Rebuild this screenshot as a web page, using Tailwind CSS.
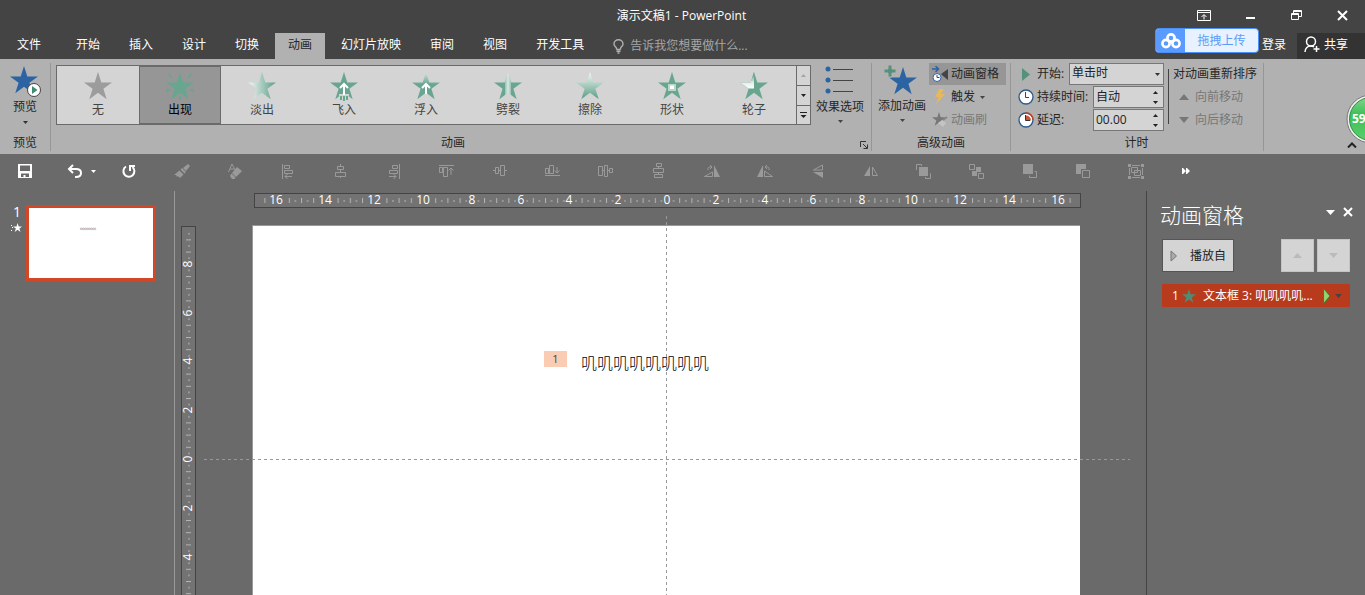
<!DOCTYPE html>
<html lang="zh-CN">
<head>
<meta charset="utf-8">
<title>演示文稿1 - PowerPoint</title>
<script src="https://cdn.jsdelivr.net/npm/@tailwindcss/browser@4"></script>
</head>
<body class="relative flex h-screen flex-col overflow-hidden bg-[#6a6a6a] font-['Open_Sans','Noto_Sans_CJK_SC',sans-serif] text-[12px] leading-4 text-white">
<svg class="absolute size-0" aria-hidden="true">
  <defs>
    <linearGradient id="fade" x1="0" x2="1" y1="0" y2="0"><stop offset="0.1" stop-color="#e4eeea"/><stop offset="0.9" stop-color="#69a690"/></linearGradient>
    <linearGradient id="float" x1="0" x2="0" y1="0" y2="1"><stop offset="0" stop-color="#d4e4de"/><stop offset="0.45" stop-color="#69a690"/></linearGradient>
    <linearGradient id="wipe" x1="0" x2="0" y1="0" y2="1"><stop offset="0" stop-color="#f4f8f6"/><stop offset="0.9" stop-color="#69a690"/></linearGradient>
    <linearGradient id="split" x1="0" x2="1" y1="0" y2="0"><stop offset="0.38" stop-color="#69a690"/><stop offset="0.4" stop-color="#9cc4b5"/><stop offset="0.5" stop-color="#d9e8e2"/><stop offset="0.6" stop-color="#9cc4b5"/><stop offset="0.62" stop-color="#69a690"/></linearGradient>
    <linearGradient id="wheel" x1="0" x2="0" y1="0" y2="1"><stop offset="0.2" stop-color="#69a690"/><stop offset="0.65" stop-color="#e4eeea"/><stop offset="1" stop-color="#ffffff"/></linearGradient>
    <linearGradient id="ball" x1="0" x2="0" y1="0" y2="1"><stop offset="0" stop-color="#7fd68c"/><stop offset="0.4" stop-color="#3fbf57"/><stop offset="1" stop-color="#58cf6a"/></linearGradient>
    <path id="star" d="M14 0 17.3 10.4H28L19.4 16.8 22.7 27.3 14 20.8 5.300 27.300 8.600 16.800 0 10.400H10.700Z"/>
    <pattern id="ticksX" x="0" y="-7" width="12.2" height="14" patternUnits="userSpaceOnUse"><rect x="0" y="4" width="1" height="5" fill="#b4b4b4"/><rect x="6.1" y="6" width="1" height="2" fill="#b4b4b4"/></pattern>
    <pattern id="ticksY" x="-7" y="0" width="14" height="12.2" patternUnits="userSpaceOnUse"><rect x="4" y="0" width="5" height="1" fill="#b4b4b4"/><rect x="6" y="6.1" width="2" height="1" fill="#b4b4b4"/></pattern>
  </defs>
</svg>

<header class="bg-[#444444]">
  <div class="flex h-[33px] items-center">
    <div class="w-[182px]"></div>
    <h1 class="flex-1 pb-px text-center">演示文稿1 - PowerPoint</h1>
    <div class="flex w-[184px] justify-end pb-[2px]">
      <button aria-label="功能区显示选项" class="flex w-[46px] items-center justify-center"><svg width="14" height="11" fill="none" stroke="#fff"><path d="M.5.5h13v10h-13zM.5 2.500h13M7 9.500V5M4.500 7 7 4.500 9.500 7"/></svg></button>
      <button aria-label="最小化" class="flex w-[46px] items-end justify-center"><svg width="9" height="4"><path d="M0 0h9v2H0z" fill="#fff"/></svg></button>
      <button aria-label="还原" class="flex w-[46px] items-center justify-center"><svg width="11" height="11" fill="none" stroke="#fff"><path d="M.5 3.500h7v6h-7zM.5 4.500h7M2.500 3V.5h8v6H8M2.500 1.500h8"/></svg></button>
      <button aria-label="关闭" class="flex w-[46px] items-center justify-center"><svg width="11" height="11"><path d="m1 1 9 9M10 1l-9 9" stroke="#fff" stroke-width="2"/></svg></button>
    </div>
  </div>
  <nav class="flex h-[26px] items-stretch gap-[3px] whitespace-nowrap">
    <button class="w-[60px] pl-[17px] pb-[2px] text-left">文件</button>
    <button class="px-[13px] pb-[2px]">开始</button>
    <button class="px-[13px] pb-[2px]">插入</button>
    <button class="px-[13px] pb-[2px]">设计</button>
    <button class="px-[13px] pb-[2px]">切换</button>
    <button class="bg-[#b1b1b1] px-[13px] pb-[2px] text-[#262626]">动画</button>
    <button class="px-[13px] pb-[2px]">幻灯片放映</button>
    <button class="px-[13px] pb-[2px]">审阅</button>
    <button class="px-[13px] pb-[2px]">视图</button>
    <button class="px-[13px] pb-[2px]">开发工具</button>
    <button class="flex items-center gap-[6px] pl-[13px] text-[#a6a6a6]"><svg width="11" height="15" fill="none" stroke="#b0b0b0" stroke-width="1.4"><path d="M3.500 10.500V9.500C3.500 8 1 7.500 1 5a4.500 4.300 0 0 1 9 0c0 2.500-2.500 3-2.500 4.500v1M3.500 10.500h4M3.500 12.300h4M4.500 14h2"/></svg><span>告诉我您想要做什么...</span></button>
    <div class="ml-auto flex">
      <button class="w-[35px] pb-[2px] text-left">登录</button>
      <button class="flex w-[68px] items-center gap-1 bg-[#333333] pl-[7px] pb-[3px]"><svg width="16" height="17" fill="none" stroke="#fff" stroke-width="1.5"><circle cx="7" cy="5.500" r="4.500"/><path d="M1 16c0-4 3-6 5.500-6 1.500 0 2.500.3 3.500 1M12.500 10v6M9.500 13h6"/></svg>共享</button>
    </div>
  </nav>
</header>

<section aria-label="动画功能区" class="flex h-[95px] shrink-0 bg-[#b1b1b1] pt-1 text-[#262626]">
  <div class="flex h-[88px] w-[51px] shrink-0 flex-col items-center border-r border-[#969696]">
    <button class="flex flex-col items-center pt-[3px]">
      <svg class="ml-[2px]" width="32" height="33" viewBox="0 0 32 33"><use href="#star" fill="#2b63a3"/><circle cx="24" cy="24" r="6.500" fill="#fff" stroke="#444"/><path d="M22 20v8l5.500-4z" fill="#3f8a70"/></svg>
      <span>预览</span>
      <svg class="mt-[6px]" width="5" height="3"><path d="M0 0h5L2.500 3z" fill="#333"/></svg>
    </button>
    <span class="mt-auto">预览</span>
  </div>

  <div class="flex h-[88px] w-[821px] shrink-0 flex-col border-r border-[#969696] pt-[2px] pl-[5px]">
    <div class="flex">
      <div class="flex h-[60px] border border-[#6a6a6a] bg-[#d4d4d4] text-[#444]">
        <button class="flex w-[82px] flex-col items-center gap-[2px] pt-[6px]"><svg width="28" height="28" fill="#9c9c9c"><use href="#star"/></svg>无</button>
        <button class="flex h-[58px] w-[82px] flex-col items-center gap-[2px] border border-[#6a6a6a] bg-[#969696] pt-[5px] text-black"><svg width="28" height="28" fill="#69a690"><use href="#star"/><path d="m2 1 4 4-1 1zM26 1l-4 4 1 1zM0 17l4 1-3 2zM28 17l-4 1 3 2zM13 28l1-4 1 4z" stroke="#69a690"/></svg>出现</button>
        <button class="flex w-[82px] flex-col items-center gap-[2px] pt-[6px]"><svg width="28" height="28"><use href="#star" fill="url(#fade)"/></svg>淡出</button>
        <button class="flex w-[82px] flex-col items-center gap-[2px] pt-[6px]"><svg class="overflow-visible" width="28" height="28"><use href="#star" fill="#69a690"/><path d="M9 22h10v7H9z" fill="#d4d4d4"/><path d="M11 24v4M14 24v5M17 24v4" stroke="#69a690" stroke-width="2"/><path d="M14 23V12M10 16l4-4 4 4" fill="none" stroke="#fff" stroke-width="2"/></svg>飞入</button>
        <button class="flex w-[82px] flex-col items-center gap-[2px] pt-[6px]"><svg width="28" height="28"><use href="#star" fill="url(#float)"/><path d="M14 22V12M10 16l4-4 4 4" fill="none" stroke="#fff" stroke-width="2"/></svg>浮入</button>
        <button class="flex w-[82px] flex-col items-center gap-[2px] pt-[6px]"><svg width="28" height="28"><use href="#star" fill="url(#split)"/></svg>劈裂</button>
        <button class="flex w-[82px] flex-col items-center gap-[2px] pt-[6px]"><svg width="28" height="28"><use href="#star" fill="url(#wipe)"/></svg>擦除</button>
        <button class="flex w-[82px] flex-col items-center gap-[2px] pt-[6px]"><svg width="28" height="28"><use href="#star" fill="#69a690"/><path d="M10 12h8v7h-8z" fill="#b9d6cb"/><path d="M12 13.500h4v3.500h-4z" fill="#fff"/></svg>形状</button>
        <button class="flex w-[82px] flex-col items-center gap-[2px] pt-[6px]"><svg width="28" height="28"><use href="#star" fill="#69a690"/><path d="M14 0v16.500H8.600L0 10.400H10.700Z" fill="url(#wheel)"/></svg>轮子</button>
        <div class="ml-px flex w-[14px] flex-col divide-y divide-[#6a6a6a] border-l border-[#6a6a6a]">
          <button aria-label="上一行" class="flex h-5 items-center justify-center"><svg width="5" height="3"><path d="M0 3h5L2.500 0z" fill="#a5a5a5"/></svg></button>
          <button aria-label="下一行" class="flex h-5 items-center justify-center"><svg width="5" height="3"><path d="M0 0h5L2.500 3z" fill="#222"/></svg></button>
          <button aria-label="其他" class="flex flex-1 items-center justify-center"><svg width="7" height="6"><path d="M0 0h7v1H0zM.5 3h6l-3 3z" fill="#222"/></svg></button>
        </div>
      </div>
      <button class="flex w-[58px] flex-col items-center">
        <svg width="30" height="32"><g fill="#2b63a3"><circle cx="3" cy="4" r="2.500"/><circle cx="3" cy="15" r="2.500"/><circle cx="3" cy="26" r="2.500"/></g><path d="M8 4.500h20M8 15.500h20M8 26.500h20" stroke="#444"/></svg>
        <span class="mt-[2px]">效果选项</span>
        <svg class="mt-[5px]" width="5" height="3"><path d="M0 0h5L2.500 3z" fill="#444"/></svg>
      </button>
    </div>
    <div class="mt-auto flex items-center"><span class="flex-1 pr-[22px] text-center">动画</span>
      <button aria-label="动画对话框" class="-ml-3 mr-[3px] mt-1"><svg width="8" height="8" fill="none" stroke="#333"><path d="M.5 6V.5H6M3 3l4 4M7.500 3.500v4h-4"/></svg></button></div>
  </div>

  <div class="flex h-[88px] w-[139px] shrink-0 flex-col border-r border-[#969696]">
    <div class="flex">
      <button class="flex w-[57px] flex-col items-center pl-[3px] pt-[2px] whitespace-nowrap">
        <svg class="-ml-[4px]" width="34" height="32"><use href="#star" fill="#2b63a3" transform="translate(6 2)"/><path d="M5 0h4v4h4v4H9v4H5V8H1V4h4z" fill="#57917c" stroke="#b1b1b1"/></svg>
        <span class="mt-px">添加动画</span>
        <svg class="mt-[5px]" width="5" height="3"><path d="M0 0h5L2.500 3z" fill="#444"/></svg>
      </button>
      <div class="flex flex-col whitespace-nowrap">
        <button class="flex h-[22px] w-[77px] items-center gap-[3px] bg-[#969696] pl-[3px]"><svg width="16" height="17"><path d="M0 3h6M3.500 0l3 3-3 3" fill="none" stroke="#2b63a3" stroke-width="1.500"/><circle cx="5" cy="11.500" r="4" fill="#fff" stroke="#2b63a3"/><path d="M5 9v2.500h2.500" fill="none" stroke="#444"/><path d="M9 8l7-5v11l-5-4z" fill="#444"/></svg>动画窗格</button>
        <button class="flex h-[23px] items-center gap-[5px] pl-[5px] pt-px"><svg width="12" height="16"><path d="M5 0h5L7 5h4L2 15l3-7H1z" fill="#eab85c"/></svg>触发<svg width="5" height="3"><path d="M0 0h5L2.500 3z" fill="#444"/></svg></button>
        <button class="flex h-[23px] items-center gap-[3px] pl-[3px] text-[#777]" disabled><svg width="16" height="16"><use href="#star" fill="#777" transform="scale(.5)"/><path d="m6 11 4-3 4 3-3 4z" fill="#c4c4c4"/><path d="m11 8 4-3" stroke="#888" stroke-width="2"/></svg>动画刷</button>
      </div>
    </div>
    <span class="mt-auto text-center">高级动画</span>
  </div>

  <div class="flex h-[88px] w-[253px] shrink-0 flex-col border-r border-[#969696] pl-[7px]">
    <div class="flex whitespace-nowrap">
      <div class="flex w-[146px] flex-col gap-px">
        <div class="flex h-[22px] items-center">
          <svg class="w-[19px]" width="19" height="13"><path d="M4 0v13l8-6.500z" fill="#57917c"/></svg>
          <label for="start" class="w-[32px]">开始:</label>
          <div class="relative flex-1">
            <select id="start" class="h-[22px] w-full appearance-none border border-[#777] bg-[#d4d4d4] px-[2px] pb-[2px] text-[12px] text-[#222]"><option>单击时</option></select>
            <svg class="pointer-events-none absolute right-1 top-[10px]" width="5" height="3"><path d="M0 0h5L2.500 3z" fill="#333"/></svg>
          </div>
        </div>
        <div class="flex h-[22px] items-center">
          <svg width="19" height="16"><circle cx="8" cy="8" r="7" fill="#fff" stroke="#2b5a8c" stroke-width="1.300"/><path d="M7.500 3v5.500H11" fill="none" stroke="#444"/></svg>
          <label for="dur" class="flex-1">持续时间:</label>
          <div class="flex h-[22px] w-[71px] border border-[#777] bg-[#d4d4d4]">
            <input id="dur" value="自动" class="w-[59px] pl-[2px] text-[#222]">
            <div class="flex flex-col justify-around"><button aria-label="增加持续时间"><svg width="5" height="3"><path d="M0 3h5L2.500 0z" fill="#222"/></svg></button><button aria-label="减少持续时间"><svg width="5" height="3"><path d="M0 0h5L2.500 3z" fill="#222"/></svg></button></div>
          </div>
        </div>
        <div class="flex h-[22px] items-center">
          <svg width="19" height="16"><circle cx="8" cy="8" r="7" fill="#fff" stroke="#2b5a8c" stroke-width="1.300"/><path d="M8 1a7 7 0 0 1 7 7" fill="none" stroke="#c8441f" stroke-width="1.500"/><path d="M8 8.500V3.500a5 5 0 0 1 5 5z" fill="#c8553a"/><path d="M7.500 3v5.500H12" fill="none" stroke="#333"/></svg>
          <label for="delay" class="flex-1">延迟:</label>
          <div class="flex h-[22px] w-[71px] border border-[#777] bg-[#d4d4d4]">
            <input id="delay" value="00.00" class="w-[59px] pl-[2px] text-[#222]">
            <div class="flex flex-col justify-around"><button aria-label="增加延迟"><svg width="5" height="3"><path d="M0 3h5L2.500 0z" fill="#222"/></svg></button><button aria-label="减少延迟"><svg width="5" height="3"><path d="M0 0h5L2.500 3z" fill="#222"/></svg></button></div>
          </div>
        </div>
      </div>
      <div class="mt-[6px] ml-1 h-[55px] w-px bg-[#444]"></div>
      <div class="flex flex-col gap-px pl-1">
        <span class="leading-[22px]">对动画重新排序</span>
        <button disabled class="flex h-[22px] items-center gap-[6px] pl-[6px] text-[#777]"><svg width="10" height="6"><path d="M0 6h10L5 0z" fill="#777"/></svg>向前移动</button>
        <button disabled class="flex h-[22px] items-center gap-[6px] pl-[6px] text-[#777]"><svg width="10" height="6"><path d="M0 0h10L5 6z" fill="#777"/></svg>向后移动</button>
      </div>
    </div>
    <span class="mt-auto pr-[8px] text-center">计时</span>
  </div>
  <button aria-label="折叠功能区" class="ml-auto mr-2 mt-auto mb-[6px]"><svg width="10" height="6"><path d="M1 5.500 5 1.500l4 4" fill="none" stroke="#222" stroke-width="2"/></svg></button>
</section>

<div role="toolbar" aria-label="快速访问工具栏" class="flex h-[36px] shrink-0 items-center overflow-hidden pb-[2px] text-[#9a9a9a] *:flex *:h-5 *:shrink-0 *:items-center *:justify-center">
  <button aria-label="保存" class="w-[50px]"><svg width="14" height="14"><path d="M0 0h14v14H0zM2 1.500V7h10V1.500zM3 9.500V13h2.500v-2h2v2H11V9.500z" fill="#fff" fill-rule="evenodd"/></svg></button>
  <button aria-label="撤消" class="w-[52px] gap-2 pl-[10px]"><svg width="16" height="14" fill="none" stroke="#fff" stroke-width="2"><path d="M6 1 2 5l4 4M2 5h7c3 0 5 1.500 5 4s-2 4-5 4H8"/></svg><svg width="5" height="3"><path d="M0 0h5L2.500 3z" fill="#fff"/></svg></button>
  <button aria-label="重复" class="w-[53px]"><svg width="14" height="14" fill="none" stroke="#fff" stroke-width="2"><path d="M4 2.500a5.500 5.500 0 1 0 6.500.5M8 7V2h5"/></svg></button>
  <button aria-label="格式刷" class="w-[53px]"><svg width="16" height="14" fill="currentColor"><path d="M14 0l2 2-4 5-3-3zM8 4l4 4-1.500 1.500-4-4zM5.500 6.500l4 4L6 14 4 12l-1 1-1-2H0z"/></svg></button>
  <button aria-label="清除格式" class="w-[53px]"><svg width="14" height="15" fill="currentColor"><path d="M9 3l5 4-6 6-4-4zM3.500 9.500l4 4-1 1.500H4l-2-3z"/><path d="M.5 8 4 0l3 6M2 5h4" fill="none" stroke="currentColor"/></svg></button>
  <button aria-label="左对齐" class="w-[53px]"><svg width="12" height="15" fill="none" stroke="currentColor"><path d="M.5 0v15M2.500 1.500h5v3h-5zM2.500 6.500h8v3h-8zM3 12.500h7M5.500 10 3 12.500 5.500 15"/></svg></button>
  <button aria-label="水平居中" class="w-[53px]"><svg width="12" height="14" fill="none" stroke="currentColor"><path d="M2.500 2.500h6v3h-6zM.5 8.500h10v4H.5zM5.500 0v2.500M5.500 5.500v3M5.500 12.500V14"/></svg></button>
  <button aria-label="右对齐" class="w-[53px]"><svg width="12" height="15" fill="none" stroke="currentColor"><path d="M11.500 0v15M4.500 1.500h5v3h-5zM1.500 6.500h8v3h-8zM1 12.500h7M5.500 10 8 12.500 5.500 15"/></svg></button>
  <button aria-label="顶端对齐" class="w-[53px]"><svg width="15" height="12" fill="none" stroke="currentColor"><path d="M0 .5h15M.5 2.500h3v5h-3zM4.500 2.500h4v9h-4zM12 10V3M9.500 5.500 12 3l2.500 2.500"/></svg></button>
  <button aria-label="垂直居中" class="w-[53px]"><svg width="14" height="12" fill="none" stroke="currentColor"><path d="M2.500 2.500h3v6h-3zM7.500.5h4v10h-4zM0 5.500h2.500M5.500 5.500h2M11.500 5.500H14"/></svg></button>
  <button aria-label="底端对齐" class="w-[53px]"><svg width="15" height="12" fill="none" stroke="currentColor"><path d="M0 10.500h15M.5 3.500h3v5h-3zM4.500.5h4v8h-4zM12 2v6M9.500 5.500 12 8l2.500-2.500"/></svg></button>
  <button aria-label="横向分布" class="w-[53px]"><svg width="15" height="12" fill="none" stroke="currentColor"><path d="M.5 1.500h4v9h-4zM6.500.5h3v11h-3zM11.500 3.500h3v4h-3zM4.500 5.500h2M9.500 5.500h2"/></svg></button>
  <button aria-label="纵向分布" class="w-[53px]"><svg width="12" height="16" fill="none" stroke="currentColor"><path d="M3.500.5h5v3h-5zM.5 5.500h10v4H.5zM1.500 11.500h8v3h-8zM5.500 3.500v2M5.500 9.500v2"/></svg></button>
  <button aria-label="向右旋转" class="w-[53px]"><svg width="16" height="12" fill="none" stroke="currentColor"><path d="M.5 11.500h8V7zM4 5V3.500C4 2 6 2 8 2M6 0l2 2-2 2"/><path d="M10 0l6 12h-6z" fill="currentColor" stroke="none"/></svg></button>
  <button aria-label="向左旋转" class="w-[53px]"><svg width="16" height="12" fill="none" stroke="currentColor"><path d="M15.500 11.500h-8V6zM12 5V3.500C12 2 10 2 8 2M10 0 8 2l2 2"/><path d="M6 0 0 12h6z" fill="currentColor" stroke="none"/></svg></button>
  <button aria-label="垂直翻转" class="w-[53px]"><svg width="10" height="14" fill="none" stroke="currentColor"><path d="M9.500 1v5h-9z"/><path d="M10 8v6L0 8z" fill="currentColor" stroke="none"/></svg></button>
  <button aria-label="水平翻转" class="w-[53px]"><svg width="14" height="10" fill="none" stroke="currentColor"><path d="M8.500 1v8.500h5z"/><path d="M6 0v10H0z" fill="currentColor" stroke="none"/></svg></button>
  <button aria-label="上移一层" class="w-[53px]"><svg width="16" height="15" fill="none" stroke="currentColor"><path d="M3 3h9v9H3z" fill="currentColor" stroke="none"/><path d="M.5 6V.5h5V2M14 9.500h.5v5h-5V13"/></svg></button>
  <button aria-label="组合对象" class="w-[53px]"><svg width="16" height="15" fill="none" stroke="currentColor"><path d="M.5.5h5v5h-5zM9.500 9.500h5v5h-5z"/><path d="M7 3h5v5H7zM3 7h5v5H3z" fill="currentColor" stroke="none"/></svg></button>
  <button aria-label="置于顶层" class="w-[53px]"><svg width="14" height="14" fill="none" stroke="currentColor"><path d="M0 0h10v10H0z" fill="currentColor" stroke="none"/><path d="M11.500 7.500h2v6h-7v-2"/></svg></button>
  <button aria-label="置于底层" class="w-[53px]"><svg width="14" height="14" fill="none" stroke="currentColor"><path d="M0 0h10v5H5v5H0z" fill="currentColor" stroke="none"/><path d="M6.500 6.500h7v7h-7z"/></svg></button>
  <button aria-label="组合" class="w-[53px]"><svg width="16" height="15" fill="none" stroke="currentColor"><path d="M4 1.500h8M4 13.500h8M1.500 4v7M14.500 4v7M3.500 3.500h6v5h-6zM6.500 6.500h6v5h-6z"/><path d="M0 0h3v3H0zM13 0h3v3h-3zM0 12h3v3H0zM13 12h3v3h-3z" fill="currentColor" stroke="none"/></svg></button>
  <button aria-label="更多命令" class="w-[48px]"><svg width="8" height="6"><path d="M0 0h1l3 3-3 3H0zM4 0h1l3 3-3 3H4z" fill="#fff"/></svg></button>
</div>

<div class="flex min-h-0 flex-1">
  <aside aria-label="幻灯片缩略图" class="mt-px flex w-[175px] shrink-0 border-r border-[#999] pt-[14px]">
    <div class="flex w-[26px] flex-col items-end pr-[4px]"><span class="-mt-px pr-px text-[14px]">1</span>
      <svg class="mt-[3px]" width="11" height="10" fill="#fff"><use href="#star" transform="translate(2 0) scale(.33)"/><path d="M0 2h1v1H0zM1 4h1v1H1zM0 7h1v1H0z"/></svg></div>
    <button aria-label="幻灯片 1" class="flex h-[76px] w-[130px] justify-center border-3 border-[#d24726] bg-white pt-5 pr-[6px]"><span class="text-[2px] leading-[4px] text-[#555]">叽叽叽叽叽叽叽叽</span></button>
  </aside>

  <main class="relative flex min-w-0 flex-1 flex-col overflow-hidden pt-[3px] pr-[66px] pl-[6px]">
    <div class="-mr-px ml-[73px] flex h-[15px] justify-center border border-[#444] bg-[#737373]">
      <svg class="shrink-0 overflow-visible" width="825" height="13" viewBox="-412 -7 825 13" shape-rendering="crispEdges">
        <rect x="-406" y="-7" width="812" height="13" fill="url(#ticksX)"/>
        <g fill="#737373"><path d="M-398-7h15V6h-15zM-349-7h15V6h-15zM-300-7h15V6h-15zM-251-7h15V6h-15zM-199-7h9V6h-9zM-150-7h9V6h-9zM-101-7h9V6h-9zM-52-7h9V6h-9zM-4-7h9V6h-9zM45-7h9V6h-9zM94-7h9V6h-9zM142-7h9V6h-9zM191-7h9V6h-9zM237-7h15V6h-15zM286-7h15V6h-15zM335-7h15V6h-15zM383-7h15V6h-15z"/></g>
        <g fill="#fff" font-size="12" font-weight="500" text-anchor="middle"><text x="-391" y="3">16</text><text x="-342" y="3">14</text><text x="-293" y="3">12</text><text x="-244" y="3">10</text><text x="-195" y="3">8</text><text x="-146" y="3">6</text><text x="-98" y="3">4</text><text x="-49" y="3">2</text><text x="0" y="3">0</text><text x="49" y="3">2</text><text x="98" y="3">4</text><text x="146" y="3">6</text><text x="195" y="3">8</text><text x="244" y="3">10</text><text x="293" y="3">12</text><text x="342" y="3">14</text><text x="391" y="3">16</text></g>
      </svg>
    </div>
    <div class="mt-[17px] flex min-h-0 flex-1">
      <div class="mt-px w-[15px] shrink-0 border border-b-0 border-[#444] bg-[#737373]">
        <svg class="overflow-visible" width="13" height="464" viewBox="-7 -232 13 464" shape-rendering="crispEdges">
          <rect x="-7" y="-228" width="13" height="456" fill="url(#ticksY)"/>
          <path fill="#737373" d="M-7-200H6v9H-7zM-7-151H6v9H-7zM-7-102H6v9H-7zM-7-53H6v9H-7zM-7-4H6v9H-7zM-7 44H6v9H-7zM-7 93H6v9H-7z"/>
          <g fill="#fff" font-size="12" font-weight="500" text-anchor="middle"><text transform="translate(3 -195) rotate(-90)">8</text><text transform="translate(3 -146) rotate(-90)">6</text><text transform="translate(3 -98) rotate(-90)">4</text><text transform="translate(3 -49) rotate(-90)">2</text><text transform="translate(3 0) rotate(-90)">0</text><text transform="translate(3 49) rotate(-90)">2</text><text transform="translate(3 98) rotate(-90)">4</text></g>
        </svg>
      </div>
      <div class="ml-[56px] flex flex-1 items-start justify-center border-t border-l border-[#999] bg-white pt-[125px] pr-[80px] text-black">
        <span class="w-[23px] bg-[#fbccb4] text-center text-[11px] text-[#444]">1</span>
        <p class="ml-[14px] text-[16px] leading-[22px] font-light font-['Noto_Sans_CJK_SC',sans-serif]">叽叽叽叽叽叽叽叽</p>
      </div>
    </div>
    <!-- drawing guides -->
    <div class="absolute top-[26px] bottom-0 left-[491px] w-px bg-[repeating-linear-gradient(180deg,#999_0_3px,transparent_3px_6px)]"></div>
    <div class="absolute top-[269px] right-[16px] left-[29px] h-px bg-[repeating-linear-gradient(90deg,#999_0_3px,transparent_3px_6px)]"></div>
  </main>

  <aside aria-label="动画窗格" class="mt-px flex w-[219px] shrink-0 flex-col border-l border-[#444] pt-[10px] pr-[15px] pl-[15px]">
    <div class="-mr-[3px] flex items-start">
      <h2 class="-ml-[2px] flex-1 text-[21px] leading-7 font-light">动画窗格</h2>
      <button aria-label="窗格选项" class="mt-[9px] mr-2"><svg width="9" height="5"><path d="M0 0h9L4.500 5z" fill="#fff"/></svg></button>
      <button aria-label="关闭窗格" class="mt-[6px]"><svg width="10" height="10"><path d="m1 1 8 8M9 1 1 9" stroke="#fff" stroke-width="2"/></svg></button>
    </div>
    <div class="mt-[10px] flex gap-[3px]">
      <button class="mr-auto flex h-[33px] w-[72px] items-center justify-between border border-[#555] bg-[#d4d4d4] px-[7px] text-[#222]"><svg width="8" height="12"><path d="M1 1v10l5.500-5z" fill="#aaa" stroke="#777"/></svg>播放自</button>
      <button aria-label="上移" class="flex h-[33px] w-[33px] items-center justify-center border border-[#c4c4c4] bg-[#d4d4d4]"><svg width="9" height="5"><path d="M0 5h9L4.500 0z" fill="#bbb"/></svg></button>
      <button aria-label="下移" class="flex h-[33px] w-[33px] items-center justify-center border border-[#c4c4c4] bg-[#d4d4d4]"><svg width="9" height="5"><path d="M0 0h9L4.500 5z" fill="#bbb"/></svg></button>
    </div>
    <button class="mt-3 flex h-[23px] items-center bg-[#b83b1d] pl-[10px] whitespace-nowrap"><span class="w-[10px] text-left">1</span><svg width="14" height="14" fill="#4d8d75"><use href="#star" transform="scale(.5)"/></svg><span class="ml-[7px] flex-1 text-left">文本框 3: 叽叽叽叽...</span><svg class="mr-[4px]" width="8" height="14"><path d="M.5.5v13h1l5.500-6.500-5.500-6.500z" fill="#92d36e" stroke="#3c7a2a"/></svg><svg class="mr-2" width="7" height="4"><path d="M0 0h7L3.500 4z" fill="#444"/></svg></button>
  </aside>
</div>

<button class="absolute top-[28px] right-[106px] flex h-[25px] w-[104px] items-center overflow-hidden rounded-[4px] border border-[#4a90f8] bg-[#e8f1ff] text-[#5b9bf8]"><span class="flex h-full w-[29px] items-center justify-center bg-[#5a9bff]"><svg width="20" height="16" fill="none" stroke="#fff" stroke-width="2.600"><circle cx="10" cy="5" r="3.600"/><circle cx="5" cy="10.500" r="3.600"/><circle cx="15" cy="10.500" r="3.600"/></svg></span><span class="flex-1 text-center">拖拽上传</span></button>
<div class="absolute top-[94px] right-0 w-[19px] overflow-hidden"><svg width="50" height="50"><circle cx="25" cy="25" r="24" fill="#eee" stroke="#777"/><circle cx="25" cy="25" r="21.500" fill="url(#ball)" stroke="#2c9440"/><text x="6" y="29" font-size="12" font-weight="bold" fill="#fff">59</text></svg></div>
</body>
</html>
